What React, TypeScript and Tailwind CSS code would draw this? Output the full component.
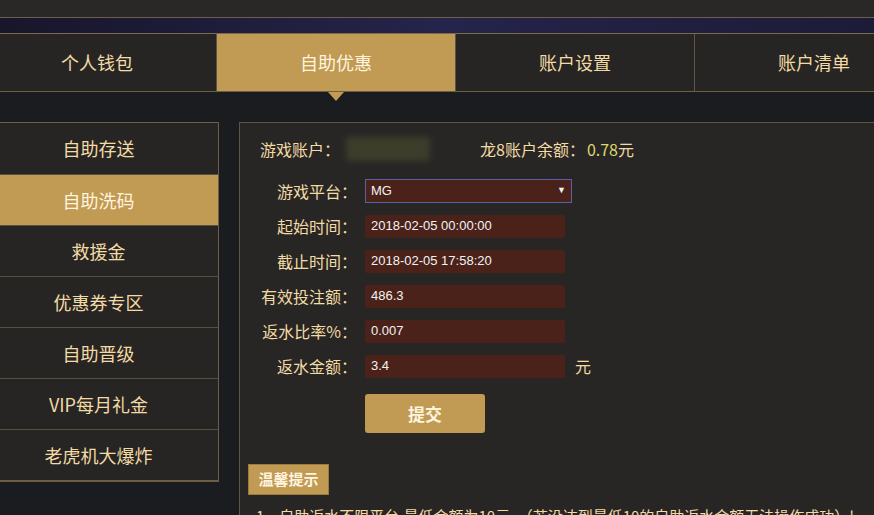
import React from "react"

const font = { fontFamily: '"Noto Sans CJK SC", "Liberation Sans", sans-serif' }

export default function App() {
  const tabs = ["个人钱包", "自助优惠", "账户设置", "账户清单"]
  const menu = ["自助存送", "自助洗码", "救援金", "优惠券专区", "自助晋级", "VIP每月礼金", "老虎机大爆炸"]
  const rows = [
    { label: "起始时间：", value: "2018-02-05 00:00:00" },
    { label: "截止时间：", value: "2018-02-05 17:58:20" },
    { label: "有效投注额：", value: "486.3" },
    { label: "返水比率%：", value: "0.007" },
    { label: "返水金额：", value: "3.4", unit: "元" },
  ]

  return (
    <div className="w-[874px] h-[515px] overflow-hidden bg-[#1b1c20] text-[#f3dba6]" style={font}>
      <div className="h-[18px] bg-[#2a2826] border-b border-[#6a604f]" />
      <div className="h-[16px] bg-gradient-to-r from-[#17162a] via-[#25244a] to-[#1c1b38] border-b border-[#7b6b4b]" />

      <div className="flex h-[58px] bg-[#272523] border-b border-[#6d5f46] ml-[-22px]">
        {tabs.map((t, i) => (
          <div
            key={t}
            className={
              "relative w-[239px] shrink-0 flex items-center justify-center text-[18px] border-r border-[#5f5546] " +
              (i === 1 ? "bg-[#c19a54] text-[#fff4de]" : "")
            }
          >
            {t}
            {i === 1 && (
              <div className="absolute left-1/2 -translate-x-1/2 top-full mt-[1px] w-0 h-0 border-l-[8px] border-r-[8px] border-t-[9px] border-l-transparent border-r-transparent border-t-[#c19a54]" />
            )}
          </div>
        ))}
      </div>

      <div className="flex mt-[30px] ml-[-22px] gap-[20px]">
        <div className="w-[241px] shrink-0 self-start bg-[#272523] border border-[#6d5f46] border-b-2">
          {menu.map((m, i) => (
            <div
              key={m}
              className={
                "h-[51px] flex items-center justify-center text-[18px] " +
                (i > 0 ? "border-t border-[#5a503f] " : "") +
                (i === 1 ? "bg-[#c19a54] text-[#fff4de]" : "")
              }
            >
              {m}
            </div>
          ))}
        </div>

        <div className="flex-1 h-[420px] bg-[#282624] border-l border-t border-[#5e5546] pl-[8px]">
          <div className="flex items-center h-[52px] text-[16px] pl-[12px]">
            <span>游戏账户：</span>
            <div className="ml-[6px] w-[84px] h-[24px] rounded bg-[#3d3d2c] blur-[3px]" />
            <span className="ml-[50px]">龙8账户余额：</span>
            <span className="ml-[2px] text-[#dcd870]">0.78</span>
            <span>元</span>
          </div>

          <div className="flex flex-col gap-[11px] mt-[4px] text-[16px]">
            <div className="flex items-center h-[24px]">
              <div className="w-[110px] text-right pr-[1px]">游戏平台：</div>
              <div className="ml-[7px] w-[207px] h-[24px] bg-[#4a221a] border border-[#5b5fab] flex items-center justify-between px-[5px] text-[13px] text-[#f2f2f2]" style={{ fontFamily: '"Liberation Sans", sans-serif' }}>
                <span>MG</span>
                <span className="text-[9px]">▼</span>
              </div>
            </div>
            {rows.map((r) => (
              <div key={r.label} className="flex items-center h-[24px]">
                <div className="w-[110px] text-right pr-[1px] whitespace-nowrap">{r.label}</div>
                <div className="ml-[7px] w-[200px] h-[23px] bg-[#4a221a] rounded-[2px] flex items-center px-[6px] text-[13px] text-[#f2f2f2]" style={{ fontFamily: '"Liberation Sans", sans-serif' }}>
                  {r.value}
                </div>
                {r.unit && <span className="ml-[10px]">{r.unit}</span>}
              </div>
            ))}
          </div>

          <div className="ml-[117px] mt-[16px] w-[120px] h-[39px] rounded-[3px] bg-[#c19a54] flex items-center justify-center text-[17px] font-bold text-[#fff4de]">
            提交
          </div>

          <div className="mt-[31px] w-[81px] h-[31px] bg-[#c19a54] border border-[#9c7b3d] flex items-center justify-center text-[15px] font-bold text-[#fff4de]">
            温馨提示
          </div>

          <div className="mt-[10px] pl-[8px] text-[15px] whitespace-nowrap">
            1、自助返水不限平台,最低金额为10元。（若没达到最低10的自助返水金额无法操作成功）!
          </div>
        </div>
      </div>
    </div>
  )
}
